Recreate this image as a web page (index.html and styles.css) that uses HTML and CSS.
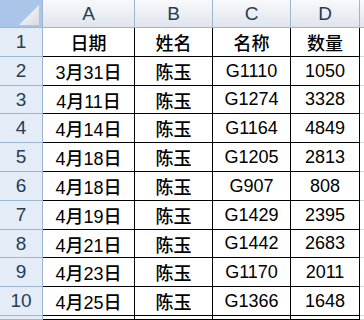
FILE: index.html
```html
<!DOCTYPE html>
<html>
<head>
<meta charset="utf-8">
<link rel="stylesheet" href="styles.css">
</head>
<body>
<div class="sheet">
  <div class="corner"><svg width="42" height="28" viewBox="0 0 42 28"><defs><linearGradient id="g" x1="0" y1="0" x2="1" y2="1"><stop offset="0" stop-color="#ffffff"/><stop offset="1" stop-color="#d6dbe2"/></linearGradient></defs><polygon points="39,5 39,25 19,25" fill="url(#g)"/></svg></div>
  <div class="ch">A</div><div class="ch">B</div><div class="ch">C</div><div class="ch">D</div><div class="ch last"></div>

  <div class="rh">1</div><div class="c">日期</div><div class="c">姓名</div><div class="c">名称</div><div class="c">数量</div><div class="e"></div>
  <div class="rh">2</div><div class="c">3月31日</div><div class="c">陈玉</div><div class="c">G1110</div><div class="c">1050</div><div class="e"></div>
  <div class="rh">3</div><div class="c">4月11日</div><div class="c">陈玉</div><div class="c">G1274</div><div class="c">3328</div><div class="e"></div>
  <div class="rh">4</div><div class="c">4月14日</div><div class="c">陈玉</div><div class="c">G1164</div><div class="c">4849</div><div class="e"></div>
  <div class="rh">5</div><div class="c">4月18日</div><div class="c">陈玉</div><div class="c">G1205</div><div class="c">2813</div><div class="e"></div>
  <div class="rh">6</div><div class="c">4月18日</div><div class="c">陈玉</div><div class="c">G907</div><div class="c">808</div><div class="e"></div>
  <div class="rh">7</div><div class="c">4月19日</div><div class="c">陈玉</div><div class="c">G1429</div><div class="c">2395</div><div class="e"></div>
  <div class="rh">8</div><div class="c">4月21日</div><div class="c">陈玉</div><div class="c">G1442</div><div class="c">2683</div><div class="e"></div>
  <div class="rh">9</div><div class="c">4月23日</div><div class="c">陈玉</div><div class="c">G1170</div><div class="c">2011</div><div class="e"></div>
  <div class="rh">10</div><div class="c">4月25日</div><div class="c">陈玉</div><div class="c">G1366</div><div class="c">1648</div><div class="e"></div>
  <div class="rh"></div><div class="c"></div><div class="c"></div><div class="c"></div><div class="c"></div><div class="e"></div>
</div>
</body>
</html>
```
FILE: styles.css
```css
html, body {
  margin: 0;
  padding: 0;
  background: #ffffff;
  overflow: hidden;
}
.sheet {
  display: grid;
  grid-template-columns: 43px 92px 78px 78px 69px 1fr;
  grid-template-rows: 28px 29px 29px 28px 29px 29px 29px 29px 28px 29px 29px 4px;
  width: 364px;
  height: 320px;
  overflow: hidden;
  font-family: "Liberation Sans", "Noto Sans CJK SC", sans-serif;
}
.sheet > div {
  box-sizing: border-box;
  display: flex;
  align-items: center;
  justify-content: center;
  overflow: hidden;
}
.corner {
  background: #a9c5ea;
  border-right: 1px solid #9eb6ce;
  border-bottom: 1px solid #9eb6ce;
}
.corner svg {
  display: block;
}
.ch {
  background: linear-gradient(#f8f9fb, #dfe4ec);
  border-right: 1px solid #9eb6ce;
  border-bottom: 1px solid #9eb6ce;
  color: #283d53;
  font-size: 19px;
}
.ch.last {
  border-right: none;
}
.rh {
  background: #e4ecf7;
  border-right: 1px solid #9eb6ce;
  border-bottom: 1px solid #9eb6ce;
  color: #283d53;
  font-size: 19px;
}
.c {
  border-right: 1px solid #000000;
  border-bottom: 1px solid #000000;
  color: #000000;
  font-size: 18px;
  font-weight: 500;
  font-family: "Liberation Sans", "Noto Sans CJK SC", sans-serif;
}
.e {
  border-bottom: 1px solid #d0d7e5;
}
```
